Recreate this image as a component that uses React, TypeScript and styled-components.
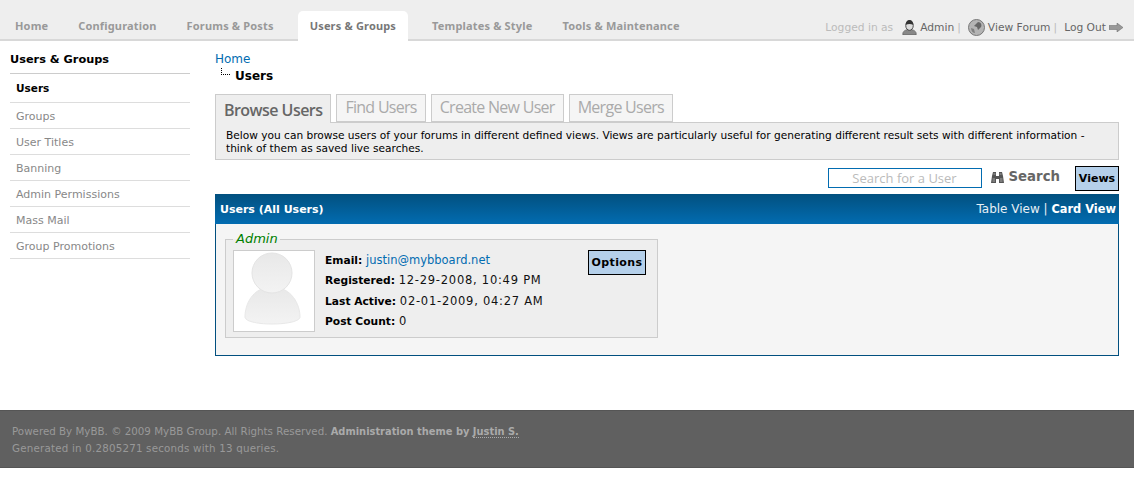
import React from 'react'
import styled, { createGlobalStyle } from 'styled-components'

const GlobalStyle = createGlobalStyle`
  html, body {
    margin: 0;
    padding: 0;
    background: #fff;
    font-family: "DejaVu Sans", Verdana, sans-serif;
    font-size: 11px;
    color: #000;
  }
  * { box-sizing: border-box; }
`

const Header = styled.div`
  display: flex;
  justify-content: space-between;
  align-items: flex-end;
  height: 41px;
  padding: 0 11px 0 3px;
  background: #eee;
  border-bottom: 2px solid #d8d8d8;
`

const Nav = styled.div`
  display: flex;
  align-items: flex-end;
`

const NavTab = styled.div<{ $active?: boolean }>`
  height: ${p => (p.$active ? '30px' : '29px')};
  line-height: ${p => (p.$active ? '29px' : '31px')};
  padding: 0 12px;
  margin-left: ${p => (p.$active ? '6px' : '0')};
  margin-right: ${p => (p.$active ? '12px' : '6px')};
  margin-bottom: ${p => (p.$active ? '-2px' : '0')};
  border-radius: 5px 5px 0 0;
  background: ${p => (p.$active ? '#fff' : 'transparent')};
  color: ${p => (p.$active ? '#777' : '#999')};
  font-family: "Noto Sans", "DejaVu Sans", sans-serif;
  font-weight: bold;
  font-size: 11px;
  letter-spacing: 0.17px;
  white-space: nowrap;
`

const UserMenu = styled.div`
  display: flex;
  align-items: center;
  height: 26px;
  margin-bottom: -1px;
  color: #666;
  font-size: 10.7px;
`

const Muted = styled.span`
  color: #bbb;
  margin-right: 9px;
`

const MenuLink = styled.span`
  display: flex;
  align-items: center;
  gap: 3px;
`

const Pipe = styled.span`
  color: #bbb;
  margin: 0 7px 0 3px;
`

const Body = styled.div`
  display: flex;
  align-items: flex-start;
  padding: 0 15px 0 10px;
`

const Sidebar = styled.div`
  width: 180px;
  flex: none;
  margin-right: 25px;
  padding-top: 10px;
`

const SideTitle = styled.div`
  height: 23px;
  line-height: 18px;
  font-size: 11.3px;
  font-weight: bold;
  border-bottom: 1px solid #ccc;
`

const SideItem = styled.div<{ $active?: boolean }>`
  height: ${p => (p.$active ? '29px' : '26px')};
  line-height: 28px;
  padding-left: 6px;
  border-bottom: 1px solid #ddd;
  font-size: ${p => (p.$active ? '10.5px' : '11px')};
  font-weight: ${p => (p.$active ? 'bold' : 'normal')};
  color: ${p => (p.$active ? '#000' : '#888')};
`

const Main = styled.div`
  flex: 1;
  min-width: 0;
  padding-top: 10px;
`

const Crumb = styled.div`
  height: 16px;
  line-height: 16px;
  font-size: 12px;
  color: #026cb1;
`

const CrumbCurrent = styled.div`
  display: flex;
  align-items: flex-start;
  height: 19px;
  padding-left: 6px;
  font-size: 12px;
  font-weight: bold;
  line-height: 18px;
`

const CrumbBranch = styled.span`
  width: 9px;
  height: 7px;
  margin: 1px 5px 0 0;
  border-left: 1px dotted #000;
  border-bottom: 1px dotted #000;
`

const SubTabs = styled.div`
  display: flex;
  align-items: flex-end;
  gap: 5px;
  height: 28px;
  margin-top: 8px;
`

const SubTab = styled.div<{ $active?: boolean }>`
  height: ${p => (p.$active ? '29px' : '28px')};
  padding: 0 8px;
  margin-bottom: ${p => (p.$active ? '-1px' : '0')};
  line-height: ${p => (p.$active ? '30px' : '24px')};
  position: relative;
  font-family: "Open Sans", "Liberation Sans", sans-serif;
  font-size: 16px;
  letter-spacing: ${p => (p.$active ? '-0.55px' : '-0.72px')};
  font-weight: ${p => (p.$active ? 600 : 400)};
  color: ${p => (p.$active ? '#666' : '#aaa')};
  background: ${p => (p.$active ? '#eee' : '#f5f5f5')};
  border: 1px solid #ccc;
  border-bottom: ${p => (p.$active ? 'none' : '1px solid #ccc')};
`

const Description = styled.div`
  height: 38px;
  padding: 6px 10px 0;
  line-height: 13px;
  font-size: 10.6px;
  background: #eee;
  border: 1px solid #ccc;
`

const SearchRow = styled.div`
  display: flex;
  justify-content: flex-end;
  align-items: center;
  height: 25px;
  margin-top: 6px;
`

const SearchInput = styled.div`
  width: 154px;
  height: 20px;
  margin-top: -2px;
  line-height: 18px;
  text-align: center;
  font-family: "Open Sans", "Liberation Sans", sans-serif;
  font-size: 13px;
  color: #bbb;
  border: 1px solid #026cb1;
  background: #fff;
`

const SearchLabel = styled.div`
  display: flex;
  align-items: center;
  gap: 5px;
  margin: -4px 15px 0 9px;
  font-size: 13.3px;
  font-weight: bold;
  color: #666;
`

const BlueButton = styled.div`
  font-size: 11px;
  font-weight: bold;
  line-height: 23px;
  text-align: center;
  background: #b5d0ea;
  border: 1px solid #000;
`

const ViewsButton = styled(BlueButton)`
  width: 44px;
  height: 25px;
`

const Panel = styled.div`
  height: 162px;
  margin-top: 3px;
  background: #f5f5f5;
  border: 1px solid #02507f;
  border-top: none;
`

const PanelHead = styled.div`
  display: flex;
  justify-content: space-between;
  align-items: center;
  height: 30px;
  margin: 0 -1px;
  padding: 0 3px 0 5px;
  color: #fff;
  background: linear-gradient(#02507f, #026cb1);
`

const PanelTitle = styled.span`
  font-size: 11px;
  font-weight: bold;
`

const PanelLinks = styled.span`
  font-size: 12px;
  color: #e8f0f6;
  & b { color: #fff; font-size: 11.4px; }
`

const Card = styled.div`
  position: relative;
  width: 433px;
  height: 99px;
  margin: 15px 0 0 9px;
  padding: 10px 11px 0 7px;
  display: flex;
  align-items: flex-start;
  background: #eee;
  border: 1px solid #ccc;
`

const Legend = styled.div`
  position: absolute;
  top: -8px;
  left: 7px;
  padding: 0 2px 0 3px;
  line-height: 14px;
  font-size: 13px;
  font-style: italic;
  color: #008000;
  background: linear-gradient(#f5f5f5 50%, #eee 50%);
`

const Avatar = styled.div`
  width: 82px;
  height: 82px;
  flex: none;
  background: #fff;
  border: 1px solid #ccc;
`

const Details = styled.div`
  flex: 1;
  padding: 0 0 0 10px;
`

const Detail = styled.div`
  height: 20.3px;
  line-height: 20px;
  font-size: 10.7px;
  font-weight: bold;
  white-space: nowrap;
  color: #000;
`

const DetailLink = styled.span`
  font-size: 11.5px;
  font-weight: normal;
  color: #026cb1;
`

const DetailValue = styled.span`
  font-size: 11.5px;
  font-weight: normal;
  letter-spacing: 0.75px;
  color: #111;
`

const OptionsButton = styled(BlueButton)`
  width: 58px;
  height: 25px;
  letter-spacing: 0.4px;
`

const Footer = styled.div`
  height: 58px;
  margin-top: 54px;
  padding: 12px 12px 0;
  line-height: 17px;
  font-size: 10.3px;
  color: #999;
  background: #606060;
  border-top: 1px solid #555;
  border-bottom: 1px solid #555;
`

const FooterStrong = styled.b`
  font-size: 9.9px;
  color: #aaa;
`

const FooterLink = styled.span`
  border-bottom: 1px dotted #aaa;
`

const FooterStats = styled.div`
  letter-spacing: 0.2px;
`

const sideItems = ['Groups', 'User Titles', 'Banning', 'Admin Permissions', 'Mass Mail', 'Group Promotions']
const navItems = ['Home', 'Configuration', 'Forums & Posts', 'Users & Groups', 'Templates & Style', 'Tools & Maintenance']

function UserIcon() {
  return (
    <svg width="15" height="15" viewBox="0 0 16 16">
      <path d="M1 16c-1-4 3-6 7-6s8 2 7 6z" fill="#888" stroke="#555" strokeWidth="0.7" />
      <ellipse cx="8" cy="6" rx="4" ry="5" fill="#ddd" stroke="#444" />
      <path d="M4 5c0-3 1.500-5 4-5s4 2 4 5c-2.500-1-5.500-1-8 0z" fill="#333" />
    </svg>
  )
}

function GlobeIcon() {
  return (
    <svg width="17" height="17" viewBox="0 0 17 17">
      <circle cx="8.500" cy="8.500" r="8" fill="#b4b4b4" stroke="#777" />
      <path d="M10 3c3 0 4 3 3 5l-3 3-1-3-3-1z" fill="#666" />
      <path d="M3 9l3 1 1 4c-2 0-4-2-4-5z" fill="#808080" />
    </svg>
  )
}

function ArrowIcon() {
  return (
    <svg width="14" height="9" viewBox="0 0 14 9">
      <path d="M0 2.500h8V0l6 4.500-6 4.500V6.500H0z" fill="#999" stroke="#666" strokeWidth="0.5" />
    </svg>
  )
}

function BinocularsIcon() {
  return (
    <svg width="13" height="12" viewBox="0 0 13 12">
      <path d="M0 12l1-7 1-4h3v4h3V1h3l1 4 1 7H8V8H5v4z" fill="#555" />
      <path d="M1.500 8h2.500M9 8h2.500M1.500 10h2.500M9 10h2.500M2.500 3h2M8.500 3h2" stroke="#bbb" strokeWidth="0.8" />
    </svg>
  )
}

function AvatarImage() {
  return (
    <svg width="80" height="80" viewBox="0 0 80 80">
      <defs>
        <linearGradient id="fig" x1="0" y1="0" x2="0" y2="1">
          <stop offset="0" stopColor="#e8e8e8" />
          <stop offset="1" stopColor="#f3f3f3" />
        </linearGradient>
      </defs>
      <path d="M11 66c0-12 7-30 27-30s28 18 28 30c0 4-12 7-28 7s-27-3-27-7z" fill="url(#fig)" stroke="#e8e8e8" />
      <circle cx="38" cy="22" r="20" fill="url(#fig)" stroke="#e4e4e4" />
    </svg>
  )
}

export default function App() {
  return (
    <>
      <GlobalStyle />
      <Header>
        <Nav>
          {navItems.map(item => (
            <NavTab key={item} $active={item === 'Users & Groups'}>{item}</NavTab>
          ))}
        </Nav>
        <UserMenu>
          <Muted>Logged in as</Muted>
          <MenuLink><UserIcon /> Admin</MenuLink>
          <Pipe>|</Pipe>
          <MenuLink><GlobeIcon /> View Forum</MenuLink>
          <Pipe>|</Pipe>
          <MenuLink>Log Out <ArrowIcon /></MenuLink>
        </UserMenu>
      </Header>
      <Body>
        <Sidebar>
          <SideTitle>Users &amp; Groups</SideTitle>
          <SideItem $active>Users</SideItem>
          {sideItems.map(item => (
            <SideItem key={item}>{item}</SideItem>
          ))}
        </Sidebar>
        <Main>
          <Crumb>Home</Crumb>
          <CrumbCurrent><CrumbBranch />Users</CrumbCurrent>
          <SubTabs>
            <SubTab $active>Browse Users</SubTab>
            <SubTab>Find Users</SubTab>
            <SubTab>Create New User</SubTab>
            <SubTab>Merge Users</SubTab>
          </SubTabs>
          <Description>
            Below you can browse users of your forums in different defined views. Views are particularly useful for generating different result sets with different information - think of them as saved live searches.
          </Description>
          <SearchRow>
            <SearchInput>Search for a User</SearchInput>
            <SearchLabel><BinocularsIcon /> Search</SearchLabel>
            <ViewsButton>Views</ViewsButton>
          </SearchRow>
          <Panel>
            <PanelHead>
              <PanelTitle>Users (All Users)</PanelTitle>
              <PanelLinks>Table View | <b>Card View</b></PanelLinks>
            </PanelHead>
            <Card>
              <Legend>Admin</Legend>
              <Avatar><AvatarImage /></Avatar>
              <Details>
                <Detail>Email: <DetailLink>justin@mybboard.net</DetailLink></Detail>
                <Detail>Registered: <DetailValue>12-29-2008, 10:49 PM</DetailValue></Detail>
                <Detail>Last Active: <DetailValue>02-01-2009, 04:27 AM</DetailValue></Detail>
                <Detail>Post Count: <DetailValue>0</DetailValue></Detail>
              </Details>
              <OptionsButton>Options</OptionsButton>
            </Card>
          </Panel>
        </Main>
      </Body>
      <Footer>
        Powered By MyBB. © 2009 MyBB Group. All Rights Reserved. <FooterStrong>Administration theme by <FooterLink>Justin S.</FooterLink></FooterStrong>
        <FooterStats>Generated in 0.2805271 seconds with 13 queries.</FooterStats>
      </Footer>
    </>
  )
}
